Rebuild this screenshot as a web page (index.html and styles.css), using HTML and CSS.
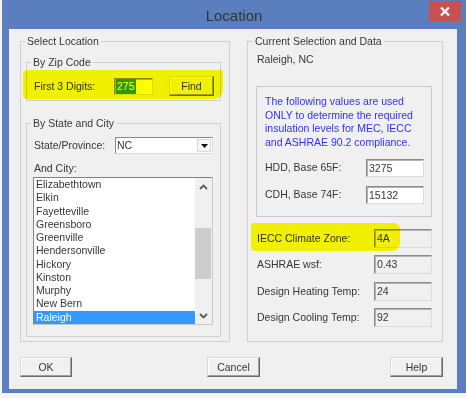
FILE: index.html
```html
<!DOCTYPE html>
<html>
<head>
<meta charset="utf-8">
<title>Location</title>
<link rel="stylesheet" href="styles.css">
</head>
<body>
<div class="window">
  <div class="titlebar">
    <div class="title">Location</div>
    <button class="close" aria-label="Close"><svg width="10" height="9" viewBox="0 0 10 9"><path d="M1 0.5 L9 8.5 M9 0.5 L1 8.5" stroke="#fff" stroke-width="2.2" fill="none"/></svg></button>
  </div>
  <div class="client">
    <div class="groups">
      <fieldset class="group group-left">
        <legend>Select Location</legend>
        <fieldset class="sub sub-zip">
          <legend>By Zip Code</legend>
          <div class="row row-zip">
            <span class="lbl lbl-zip">First 3 Digits:</span>
            <div class="field field-white field-zip"><span class="sel">275</span></div>
            <button class="btn btn-find">Find</button>
          </div>
        </fieldset>
        <fieldset class="sub sub-state">
          <legend>By State and City</legend>
          <div class="row row-state">
            <span class="lbl lbl-state">State/Province:</span>
            <div class="combo">
              <span class="combo-text">NC</span>
              <span class="combo-btn"><svg width="7" height="4" viewBox="0 0 7 4"><path d="M0 0 H7 L3.5 4 Z" fill="#111"/></svg></span>
            </div>
          </div>
          <div class="lbl lbl-city">And City:</div>
          <div class="listbox">
            <ul class="items">
              <li>Elizabethtown</li>
              <li>Elkin</li>
              <li>Fayetteville</li>
              <li>Greensboro</li>
              <li>Greenville</li>
              <li>Hendersonville</li>
              <li>Hickory</li>
              <li>Kinston</li>
              <li>Murphy</li>
              <li>New Bern</li>
              <li class="selected">Raleigh</li>
            </ul>
            <div class="vscroll">
              <div class="sb-btn"><svg width="9" height="6" viewBox="0 0 9 6"><polyline points="1,5 4.5,1.5 8,5" fill="none" stroke="#5a5a5a" stroke-width="1.8"/></svg></div>
              <div class="sb-track"><div class="sb-thumb"></div></div>
              <div class="sb-btn"><svg width="9" height="6" viewBox="0 0 9 6"><polyline points="1,1 4.5,4.5 8,1" fill="none" stroke="#5a5a5a" stroke-width="1.8"/></svg></div>
            </div>
          </div>
        </fieldset>
      </fieldset>
      <fieldset class="group group-right">
        <legend>Current Selection and Data</legend>
        <div class="current">Raleigh, NC</div>
        <div class="infobox">
          <p class="note">The following values are used<br>ONLY to determine the required<br>insulation levels for MEC, IECC<br>and ASHRAE 90.2 compliance.</p>
          <div class="row row-info"><span class="lbl lbl-info">HDD, Base 65F:</span><div class="field field-white field-info">3275</div></div>
          <div class="row row-info row-info2"><span class="lbl lbl-info">CDH, Base 74F:</span><div class="field field-white field-info">15132</div></div>
        </div>
        <div class="row row-data row-first"><span class="lbl lbl-data">IECC Climate Zone:</span><div class="field field-data">4A</div></div>
        <div class="row row-data"><span class="lbl lbl-data">ASHRAE wsf:</span><div class="field field-data">0.43</div></div>
        <div class="row row-data row-gap8"><span class="lbl lbl-data">Design Heating Temp:</span><div class="field field-data">24</div></div>
        <div class="row row-data"><span class="lbl lbl-data">Design Cooling Temp:</span><div class="field field-data">92</div></div>
      </fieldset>
    </div>
    <div class="buttons">
      <button class="btn btn-ok">OK</button>
      <button class="btn btn-cancel">Cancel</button>
      <button class="btn btn-help">Help</button>
    </div>
    <div class="marker marker-zip"></div>
    <div class="marker marker-iecc"></div>
  </div>
</div>
</body>
</html>
```

FILE: styles.css
```css
* { box-sizing: border-box; }
html, body { margin: 0; padding: 0; }
body {
  width: 466px;
  height: 398px;
  overflow: hidden;
  background: #f4f4f4;
  font-family: "Liberation Sans", Arial, sans-serif;
  font-size: 10.5px;
  color: #363636;
}
.window {
  margin-left: 2px;
  width: 464px;
  height: 393px;
  background: #5b7fbe;
  display: flex;
  flex-direction: column;
}
.titlebar {
  height: 29px;
  flex: none;
  display: grid;
  grid-template-columns: 1fr auto 1fr;
}
.title {
  grid-column: 2;
  font-family: "Liberation Sans", Arial, sans-serif;
  font-size: 15px;
  color: #333;
  padding-top: 3px;
  line-height: 26px;
}
.close {
  grid-column: 3;
  justify-self: end;
  align-self: start;
  margin: 1px 5px 0 0;
  width: 32px;
  height: 20px;
  padding: 0;
  border: 0;
  background: #c75050;
  display: flex;
  align-items: center;
  justify-content: center;
}
.client {
  position: relative;
  margin-left: 7px;
  width: 448px;
  height: 360px;
  background: #f0f0f0;
  padding: 6px 14px 0 11px;
}
.groups {
  display: flex;
  gap: 17px;
}
fieldset {
  margin: 0;
  min-width: 0;
  border: 1px solid #d0d0d0;
}
legend {
  padding: 0 2px;
  line-height: 13px;
  height: 13px;
  white-space: nowrap;
}
.group-left {
  width: 210px;
  padding: 8px 8px 4px 5px;
}
.group-left > legend { margin-left: -1px; }
.group-right {
  width: 196px;
  padding: 5px 9px 0 9px;
}
.group-right > legend { margin-left: -4px; }
.sub { padding: 7px 7px 4px 7px; }
.sub > legend { margin-left: -3px; }
.sub-state {
  margin-top: 16px;
  padding-bottom: 11px;
}
.row {
  display: flex;
  align-items: center;
}
.lbl { white-space: nowrap; line-height: 13px; }
.row-zip { height: 20px; }
.lbl-zip { width: 80px; flex: none; }
.field {
  flex: none;
  height: 19px;
  border: 1px solid;
  border-color: #8a8a8a #dcdcdc #dcdcdc #8a8a8a;
  box-shadow: inset 1px 1px #b4b4b4;
  background: #f0f0f0;
  padding: 0 0 0 2px;
  line-height: 17px;
  white-space: nowrap;
  color: #363636;
}
.field-white { background: #fff; }
.field-zip {
  width: 39px;
  height: 17px;
  line-height: 15px;
  padding-left: 1px;
  padding-top: 0;
}
.sel {
  display: inline-block;
  background: #3399ff;
  color: #fff;
  height: 15px;
  padding: 0 1px;
}
.btn {
  font: inherit;
  color: #363636;
  background: #f0f0f0;
  border: 1px solid;
  border-color: #d8d8d8 #696969 #696969 #d8d8d8;
  box-shadow: inset -1px -1px #a0a0a0, inset 1px 1px #fff;
  padding: 0;
  height: 20px;
  line-height: 17px;
}
.btn-find {
  margin-left: 16px;
  width: 45px;
  flex: none;
}
.row-state { height: 17px; }
.lbl-state { width: 81px; flex: none; }
.combo {
  width: 98px;
  height: 17px;
  display: flex;
  background: #fff;
  border: 1px solid;
  border-color: #8a8a8a #dcdcdc #dcdcdc #8a8a8a;
}
.combo-text {
  flex: 1;
  padding-left: 1px;
  line-height: 15px;
}
.combo-btn {
  width: 14px;
  margin: 1px 1px 1px 0;
  border: 1px solid #d9d9d9;
  background: #f7f7f7;
  display: flex;
  align-items: center;
  justify-content: center;
}
.lbl-city { margin-top: 8px; }
.listbox {
  margin-top: 2px;
  margin-left: -1px;
  width: 180px;
  height: 148px;
  display: flex;
  background: #fff;
  border: 1px solid;
  border-color: #828282 #c8c8c8 #c8c8c8 #828282;
}
.items {
  list-style: none;
  margin: 0;
  padding: 0;
  flex: 1;
  min-width: 0;
}
.items li {
  height: 13.27px;
  line-height: 13.27px;
  padding-left: 2px;
  white-space: nowrap;
}
.items li.selected {
  background: #3399ff;
  color: #fff;
}
.vscroll {
  width: 17px;
  flex: none;
  display: flex;
  flex-direction: column;
  background: #f0f0f0;
}
.sb-btn {
  height: 17px;
  flex: none;
  display: flex;
  align-items: center;
  justify-content: center;
}
.sb-track { flex: 1; }
.sb-thumb {
  margin-top: 33px;
  width: 16px;
  height: 51px;
  background: #cdcdcd;
}
.current {
  line-height: 13px;
}
.infobox {
  margin-top: 20px;
  margin-left: -1px;
  width: 176px;
  border: 1px solid #cacaca;
  padding: 8px 4px 12px 8px;
}
.note {
  margin: 0 0 9.6px 0;
  color: #3030ff;
  line-height: 13.6px;
  white-space: nowrap;
}
.row-info { height: 18px; }
.row-info2 { margin-top: 9px; }
.lbl-info { width: 101px; flex: none; }
.field-info {
  width: 58px;
  height: 18px;
  line-height: 16px;
}
.row-data { height: 19px; margin-top: 7px; }
.row-first { margin-top: 12px; }
.row-gap8 { margin-top: 8px; }
.lbl-data { width: 117px; flex: none; }
.field-data { width: 58px; }
.buttons {
  display: flex;
  justify-content: space-between;
  margin-top: 15px;
}
.btn-ok { width: 52px; }
.btn-cancel { width: 53px; margin-left: 5px; }
.btn-help { width: 53px; }
.marker {
  position: absolute;
  background: #ffff00;
  mix-blend-mode: multiply;
  pointer-events: none;
}
.marker-zip {
  left: 14px;
  top: 41px;
  width: 200px;
  height: 29px;
  border-radius: 5px 3px 9px 4px;
}
.marker-iecc {
  left: 242px;
  top: 194px;
  width: 149px;
  height: 28px;
  border-radius: 3px 6px 8px 4px;
}
```
